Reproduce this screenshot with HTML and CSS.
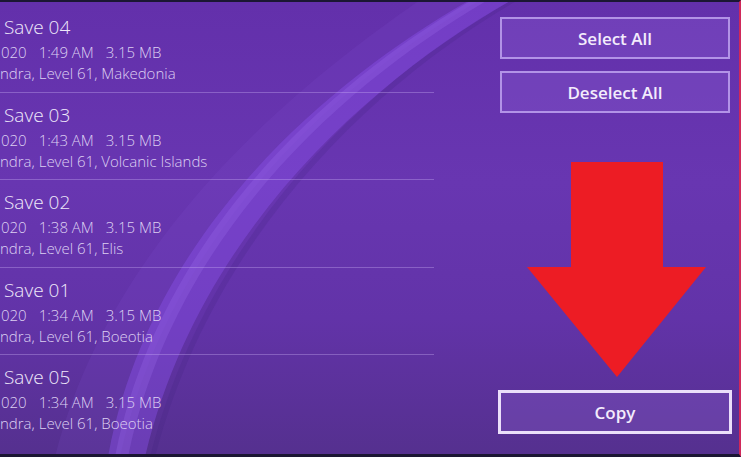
FILE: index.html
```
<!DOCTYPE html>
<html lang="en">
<head>
    <meta charset="UTF-8">
    <meta name="viewport" content="width=device-width, initial-scale=1.0">
    <title>Saved Data - Copy</title>
    <link rel="stylesheet" href="styles.css">
</head>
<body>

<div class="screen">
    <!-- background wave -->
    <svg class="wave" width="741" height="457" viewBox="0 0 741 457" aria-hidden="true">
        <path d="M420 0 C290 90 110 240 55 457 L120 457 C170 230 340 80 480 0 Z" fill="#8a5ae0" opacity="0.12"/>
        <path d="M470 0 C330 80 150 230 108 457 L145 457 C200 225 380 75 512 0 Z" fill="#8b52ee" opacity="0.4"/>
        <path d="M472 0 C335 80 160 230 115 457 L128 457 C175 230 350 80 488 0 Z" fill="#a070f0" opacity="0.25"/>
        <path d="M512 0 C385 70 210 220 150 457 L155 457 C216 222 392 72 518 0 Z" fill="#3e1f7a" opacity="0.18"/>
    </svg>

    <div class="content">
        <div class="save-list">
            <div class="save-row">
                <div class="save-title">Save 04</div>
                <div class="save-info"><span>020</span><span>1:49 AM</span><span>3.15 MB</span></div>
                <div class="save-place">ndra, Level 61, Makedonia</div>
            </div>
            <div class="save-row">
                <div class="save-title">Save 03</div>
                <div class="save-info"><span>020</span><span>1:43 AM</span><span>3.15 MB</span></div>
                <div class="save-place">ndra, Level 61, Volcanic Islands</div>
            </div>
            <div class="save-row">
                <div class="save-title">Save 02</div>
                <div class="save-info"><span>020</span><span>1:38 AM</span><span>3.15 MB</span></div>
                <div class="save-place">ndra, Level 61, Elis</div>
            </div>
            <div class="save-row">
                <div class="save-title">Save 01</div>
                <div class="save-info"><span>020</span><span>1:34 AM</span><span>3.15 MB</span></div>
                <div class="save-place">ndra, Level 61, Boeotia</div>
            </div>
            <div class="save-row">
                <div class="save-title">Save 05</div>
                <div class="save-info"><span>020</span><span>1:34 AM</span><span>3.15 MB</span></div>
                <div class="save-place">ndra, Level 61, Boeotia</div>
            </div>
        </div>

        <div class="side">
            <button class="side-btn">Select All</button>
            <button class="side-btn">Deselect All</button>

            <svg class="arrow" width="180" height="216" viewBox="0 0 180 216">
                <polygon points="44,0 136,0 136,105 179,105 90,215 0,105 44,105" fill="#ed1c24"/>
            </svg>

            <button class="side-btn copy-btn">Copy</button>
        </div>
    </div>
</div>

</body>
</html>
```

FILE: styles.css
```
body {
    margin: 0;
    background-color: #1b1633;
    font-family: "Open Sans", "Noto Sans", sans-serif;
}

.screen {
    position: relative;
    width: 739px;
    height: 452px;
    border-top: 2px solid #1b1633;
    border-bottom: 3px solid #1b1633;
    border-right: 2px solid #d0285a;
    background: linear-gradient(180deg, #6330ab 0%, #6836b1 40%, #6233a8 70%, #55308f 100%);
    overflow: hidden;
}

.wave {
    position: absolute;
    top: -2px;
    left: 0;
}

.content {
    position: relative;
    display: flex;
    height: 100%;
}

.save-list {
    width: 434px;
    padding-top: 3px;
}

.save-row {
    height: 86.5px;
    padding-left: 4px;
    border-bottom: 1px solid rgba(205, 180, 245, 0.35);
    box-sizing: content-box;
}

.save-row:last-child {
    border-bottom: none;
}

.save-title {
    padding-top: 10px;
    font-size: 19px;
    font-weight: 300;
    line-height: 24px;
    color: #efe8fa;
}

.save-info {
    display: flex;
    gap: 12px;
    margin-top: 2px;
    margin-left: -3px;
    font-size: 15px;
    font-weight: 300;
    line-height: 22px;
    color: #ddd0f2;
}

.save-place {
    margin-left: -4px;
    font-size: 15px;
    font-weight: 300;
    line-height: 20px;
    color: #ddd0f2;
}

.side {
    display: flex;
    flex-direction: column;
    align-items: flex-start;
    padding-top: 15px;
    padding-left: 66px;
}

.side-btn {
    width: 230px;
    height: 42px;
    margin-bottom: 12px;
    background: rgba(160, 120, 230, 0.22);
    border: 2px solid rgba(200, 175, 245, 0.75);
    color: #f3ecfc;
    font-family: inherit;
    font-size: 17px;
    font-weight: 600;
}

.arrow {
    margin-top: 37px;
    margin-left: 27px;
    margin-bottom: 12px;
}

.copy-btn {
    width: 234px;
    height: 44px;
    margin-left: -2px;
    border: 3px solid #ebdffa;
    background: rgba(150, 110, 220, 0.25);
}
```
